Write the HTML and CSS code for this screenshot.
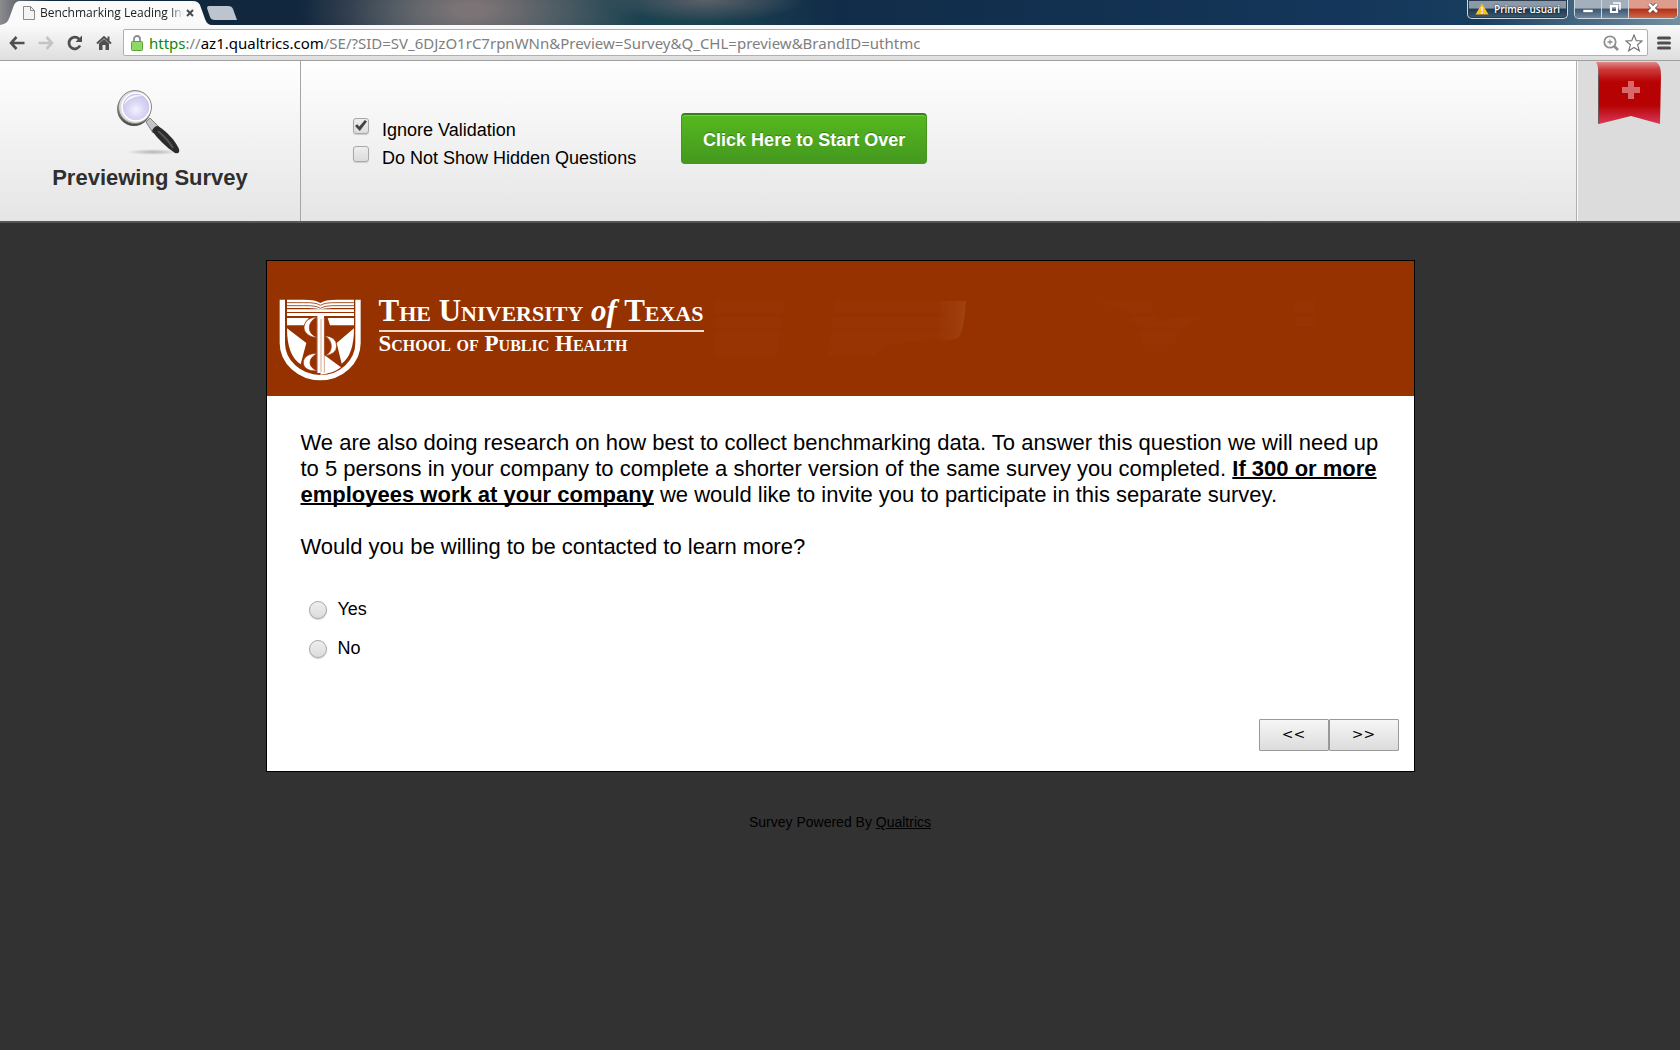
FILE: index.html
```
<!DOCTYPE html>
<html lang="en">
  <head>
    <meta charset="utf-8" />
    <meta name="viewport" content="width=device-width, initial-scale=1.0" />
    <title>Benchmarking Leading Indicators</title>
    <link rel="stylesheet" href="styles.css">
  </head>

  <body>
    <div class="titlebar">
      <div class="tab">
        <svg class="tab-icon" width="12" height="14" viewBox="0 0 12 14">
          <path d="M1 .5h6.500l4 4v9H.5V.5z" fill="#f4f4f4" stroke="#8a8a8a" />
          <path d="M7.500.5v4h4" fill="none" stroke="#8a8a8a" />
        </svg>
        <span class="tab-title">Benchmarking Leading Inc</span>
        <button class="tab-close" aria-label="Close tab">
          <svg width="8" height="8" viewBox="0 0 8 8">
            <path d="M1 1l6 6M7 1L1 7" stroke="#4a4a4a" stroke-width="2" />
          </svg>
        </button>
      </div>
      <button class="new-tab" aria-label="New tab"></button>
      <div class="window-buttons">
        <button class="user">
          <svg width="14" height="12" viewBox="0 0 14 12">
            <path d="M7 .5L13.500 11.500H.5z" fill="#fdbe1f" />
            <path d="M7 4v4M7 9v1.500" stroke="#fff" stroke-width="1.400" />
          </svg>
          Primer usuari
        </button>
        <div class="window-group">
          <button class="win min" aria-label="Minimize">
            <svg width="12" height="12" viewBox="0 0 12 12">
              <path d="M1 7.500h10v3H1z" fill="#fff" stroke="#4a5868" stroke-width=".6" />
            </svg>
          </button>
          <button class="win restore" aria-label="Restore">
            <svg width="12" height="12" viewBox="0 0 12 12">
              <path d="M4 1h7v7" fill="none" stroke="#fff" stroke-width="1.500" />
              <path d="M2 4h6v6H2z" fill="none" stroke="#fff" stroke-width="2.200" />
            </svg>
          </button>
          <button class="win close" aria-label="Close">
            <svg width="12" height="10" viewBox="0 0 12 10">
              <path d="M2 1l8 8M10 1L2 9" stroke="#503030" stroke-width="4" />
              <path d="M2 1l8 8M10 1L2 9" stroke="#fff" stroke-width="2.800" />
            </svg>
          </button>
        </div>
      </div>
    </div>

    <div class="toolbar">
      <button class="tool" aria-label="Back">
        <svg width="16" height="14" viewBox="0 0 16 14">
          <path d="M7.500 1L2 7l5.500 6M2 7h13.500" fill="none" stroke="#4f4f4f" stroke-width="2.600" />
        </svg>
      </button>
      <button class="tool" aria-label="Forward">
        <svg width="16" height="14" viewBox="0 0 16 14">
          <path d="M8.500 1L14 7l-5.500 6M14 7H.5" fill="none" stroke="#c4c4c4" stroke-width="2.600" />
        </svg>
      </button>
      <button class="tool" aria-label="Reload">
        <svg width="16" height="16" viewBox="0 0 16 16">
          <path d="M13 10.500A5.800 5.800 0 1 1 12 4" fill="none" stroke="#4f4f4f" stroke-width="2.800" />
          <path d="M15 .5V7H8.500z" fill="#4f4f4f" />
        </svg>
      </button>
      <button class="tool home" aria-label="Home">
        <svg width="16" height="16" viewBox="0 0 16 16">
          <path d="M1 8.500L8 2l7 6.500M12.500 1.500v4" fill="none" stroke="#4f4f4f" stroke-width="2" />
          <path d="M3 8.500L8 4l5 4.500V15H9.500v-5h-3v5H3z" fill="#4f4f4f" />
        </svg>
      </button>
      <div class="omnibox">
        <svg width="12" height="16" viewBox="0 0 12 16">
          <path d="M3 7V4a3 3 0 0 1 6 0v3" fill="none" stroke="#8c8c8c" stroke-width="1.800" />
          <rect x=".5" y="6.500" width="11" height="9" rx="1" fill="#8fd866" stroke="#55a637" />
        </svg>
        <span class="url"><span class="scheme">https</span>://<span class="host">az1.qualtrics.com</span>/SE/?SID=SV_6DJzO1rC7rpnWNn&amp;Preview=Survey&amp;Q_CHL=preview&amp;BrandID=uthtmc</span>
        <svg width="16" height="16" viewBox="0 0 16 16">
          <circle cx="7" cy="7" r="5.700" fill="none" stroke="#8f8f8f" stroke-width="1.800" />
          <path d="M7 4.500v5M4.500 7h5" stroke="#8f8f8f" stroke-width="1.300" />
          <path d="M11 11l4 4" stroke="#8f8f8f" stroke-width="2.600" />
        </svg>
        <svg width="18" height="18" viewBox="0 0 18 18">
          <path d="M9 1l2.300 5.700 5.900.3-4.600 3.800 1.700 6L9 13.400l-5.300 3.400 1.700-6L.8 7l5.900-.3z" fill="#fff" stroke="#777" stroke-width="1.200" />
        </svg>
      </div>
      <button class="tool menu" aria-label="Menu">
        <svg width="14" height="14" viewBox="0 0 14 14">
          <path d="M1.500 2h11M1.500 7h11M1.500 12h11" stroke="#4f4f4f" stroke-width="3" stroke-linecap="round" />
        </svg>
      </button>
    </div>

    <header class="preview-bar">
      <div class="preview-title">
        <svg width="66" height="66" viewBox="0 0 66 66">
          <defs>
            <radialGradient id="lens" cx=".5" cy=".6" r=".6">
              <stop offset="0" stop-color="#f4f2ff" />
              <stop offset=".5" stop-color="#d9d6f5" />
              <stop offset="1" stop-color="#c6c2e8" />
            </radialGradient>
            <linearGradient id="rim" x1="0" y1="0" x2="0" y2="1">
              <stop offset="0" stop-color="#a5a5a5" />
              <stop offset="1" stop-color="#4a4a4a" />
            </linearGradient>
            <radialGradient id="shade">
              <stop offset="0" stop-color="#777" stop-opacity=".5" />
              <stop offset="1" stop-color="#777" stop-opacity="0" />
            </radialGradient>
          </defs>
          <ellipse cx="36" cy="62" rx="26" ry="3" fill="url(#shade)" />
          <path d="M29 32l4-4 9 9-6 6z" fill="#c4c4c4" stroke="#858585" />
          <path d="M35 41c1-3 3-5 6-5 9 6 17 14 21 23 1 4-1 5-4 4-9-6-17-14-23-22z" fill="#2b2b2b" />
          <path d="M41 41c7 6 12 12 15 17" fill="none" stroke="#555" stroke-width="2" />
          <circle cx="17" cy="19" r="17" fill="url(#rim)" />
          <circle cx="18" cy="17" r="16.500" fill="#d8d8d8" stroke="#888" />
          <circle cx="19" cy="17" r="14" fill="url(#lens)" stroke="#fff" stroke-width="1.500" />
          <path d="M7 15C9 6 18 3 26 6 18 6 11 9 7 15z" fill="#fff" opacity=".8" />
        </svg>
        <h1>Previewing Survey</h1>
      </div>
      <div class="preview-options">
        <div class="checks">
          <label><input type="checkbox" checked /><span>Ignore Validation</span></label>
          <label><input type="checkbox" /><span>Do Not Show Hidden Questions</span></label>
        </div>
        <button class="start-over">Click Here to Start Over</button>
      </div>
      <div class="preview-side">
        <svg width="66" height="64" viewBox="0 0 66 64">
          <defs>
            <linearGradient id="ribbon" x1="0" y1="0" x2="0" y2="1">
              <stop offset="0" stop-color="#df8a8a" />
              <stop offset=".12" stop-color="#cf3a3a" />
              <stop offset=".32" stop-color="#b60202" />
              <stop offset=".7" stop-color="#b60202" />
              <stop offset="1" stop-color="#d93a5c" />
            </linearGradient>
          </defs>
          <path d="M1 2q2 4 1 12v48l2-1V10z" fill="#6d5555" />
          <path d="M0 0H60Q65 2 65 14L64 62 35 54 3 62V14Q3 5 0 0z" fill="url(#ribbon)" />
          <path d="M32 19h6v6h6v6h-6v6h-6v-6h-6v-6h6z" fill="#d66a6a" />
        </svg>
      </div>
    </header>

    <main class="survey">
      <div class="banner">
        <svg class="shield" width="82" height="82" viewBox="55 58 246 246">
          <path d="M65 60V190C65 246 116 294 179 294S292 246 292 190V60" fill="none" stroke="#fff" stroke-width="16" />
          <path d="M79 60h50q38 0 50 10 12-10 50-10h51v25h-65q-28 0-36 5-8-5-35-5H79z" fill="#fff" />
          <path d="M79 69h50q38-1 50 8 14-9 50-8h51M79 78h50q38-1 50 8 14-9 50-8h51" fill="none" stroke="#963100" stroke-width="2.500" />
          <path d="M79 89h201v8H79zM79 100h201v9H79zM79 115h66q-12 9-15 22H79zM201 115h79v22h-72z" fill="#fff" />
          <path d="M79 146l58 44-17 64Q79 228 79 146zM280 146l-52 44 15 62q37-26 37-106z" fill="#fff" />
          <path d="M190 225l51 38q-24 20-62 22z" fill="#fff" />
          <path d="M170 112C144 112 130 128 130 144s18 30 40 29q-24-8-24-29t24-32zM192 168q34 2 36 30 0 26-36 30 20-8 20-28t-20-32zM170 221c-27 0-42 12-42 28s17 27 42 24q-22-8-22-24t22-28z" fill="#fff" stroke="#963100" stroke-width="2" />
          <path d="M170 106h20v174h-20z" fill="#fff" />
          <path d="M169 115v164M191 115v164M181 118v160" stroke="#c07a55" stroke-width="2" />
        </svg>
        <div class="brand">
          <div class="brand-name">The University <i>of</i> Texas</div>
          <div class="brand-school">School of Public Health</div>
        </div>
        <svg class="pattern" width="600" height="80" viewBox="0 0 600 80">
          <defs>
            <linearGradient id="gleam">
              <stop offset="0" stop-color="#a0420f" stop-opacity="0" />
              <stop offset="1" stop-color="#a0420f" />
            </linearGradient>
          </defs>
          <path d="M0 14h70l-8 56H0zM120 14h120l-10 38-60 6-10 11h-48zM380 14h55l8 20 50-10-30 22-4 12h-30l-14-32zM580 14h20v26h-20z" fill="#983303" />
          <path d="M0 28h600M0 42h600" stroke="#963100" stroke-width="3" />
          <path d="M226 14h25q-2 36-10 38l-21 3z" fill="url(#gleam)" />
        </svg>
      </div>

      <form class="question">
        <div class="question-text">
          <p>We are also doing research on how best to collect benchmarking data. To answer this question we will need up to 5 persons in your company to complete a shorter version of the same survey you completed. <b>If 300 or more employees work at your company</b> we would like to invite you to participate in this separate survey.</p>
          <p>Would you be willing to be contacted to learn more?</p>
        </div>
        <div class="choices">
          <label><input type="radio" name="contact" value="yes" /><span>Yes</span></label>
          <label><input type="radio" name="contact" value="no" /><span>No</span></label>
        </div>
        <div class="pager">
          <button type="button">&lt;&lt;</button>
          <button type="button">&gt;&gt;</button>
        </div>
      </form>
    </main>

    <footer>Survey Powered By <a href="#">Qualtrics</a></footer>
  </body>
</html>
```

FILE: styles.css
```
* {
  box-sizing: border-box;
}

body {
  margin: 0;
  min-height: 100vh;
  background-color: #323232;
  color: #000;
  font-family: "Liberation Sans", Arial, sans-serif;
  font-size: 18px;
}

button {
  margin: 0;
  padding: 0;
  border: 0;
  background: none;
  font-family: inherit;
}

svg {
  display: block;
  flex: none;
}

/* window frame */
.titlebar {
  display: flex;
  height: 25px;
  background:
    linear-gradient(to right, #8c8c8e 0, #8c8c8e00 50px),
    radial-gradient(ellipse 100px 22px at 42% 0, #5c5f68, #5c5f6800),
    radial-gradient(ellipse 170px 70px at 28% 40%, #7b7375 10%, #7b737500),
    linear-gradient(to right, #10263b 0, #12283e 21%, #1b4250 25%, #1b4250 42%, #112c48 50%, #14365a 80%, #173d5e 88%, #5c7b92 97%, #75909f);
}

.tab {
  display: flex;
  align-items: center;
  width: 212px;
  padding: 0 18px 0 23px;
  background-color: #fafafa;
  clip-path: path("M0 25C6 24 8 22 10 16L14 5Q16 1 20 1H193Q198 1 200 5L205 19Q207 25 212 25Z");
}

.tab-title {
  flex: 1;
  margin: 0 2px 0 5px;
  overflow: hidden;
  white-space: nowrap;
  font-family: "Open Sans", "Noto Sans", sans-serif;
  font-size: 12px;
  color: #222;
  -webkit-mask-image: linear-gradient(to right, #000 90%, transparent);
  mask-image: linear-gradient(to right, #000 90%, transparent);
}

.new-tab {
  width: 32px;
  height: 14px;
  margin-top: 6px;
  margin-left: -6px;
  background-color: #bcc5cf;
  clip-path: path("M3 0H22Q26 0 27 3L31 14H9Q5 14 4 11L1 2Q1 0 3 0Z");
}

.window-buttons {
  display: flex;
  gap: 6px;
  height: 19px;
  margin-left: auto;
  padding-right: 2px;
}

.user,
.window-group {
  border: 1px solid #cdd8e0;
  border-top: 0;
  border-radius: 0 0 5px 5px;
  box-shadow: inset 0 0 0 1px #2b3c4e;
  overflow: hidden;
}

.user {
  display: flex;
  align-items: center;
  gap: 5px;
  padding: 0 7px 1px;
  background: linear-gradient(#8c9aa8 45%, #1d3953 50%, #3c5a72);
  color: #fff;
  font-family: "Open Sans", "Noto Sans", sans-serif;
  font-size: 10px;
  font-weight: 600;
  text-shadow: 0 0 2px #000;
}

.window-group {
  display: flex;
}

.win {
  display: flex;
  align-items: center;
  justify-content: center;
  width: 27px;
  padding-bottom: 2px;
  border-right: 1px solid #cdd8e0;
  background: linear-gradient(#a3b0bc 45%, #3c5570 50%, #7089a0);
}

.win.close {
  width: 48px;
  border-right: 0;
  background: linear-gradient(#dd9c8c 45%, #b32d17 50%, #cf6a48);
}

.toolbar {
  display: flex;
  align-items: center;
  height: 36px;
  padding: 0 7px 0 9px;
  border-bottom: 1px solid #a0a0a0;
  background: linear-gradient(#fafafa, #dedede);
}

.tool {
  width: 16px;
  margin-right: 13px;
}

.tool.home {
  margin-right: 11px;
}

.tool.menu {
  margin: 0 0 0 9px;
}

.omnibox {
  display: flex;
  flex: 1;
  align-items: center;
  gap: 6px;
  height: 27px;
  padding: 0 4px 0 7px;
  border: 1px solid #b0b0b0;
  border-radius: 2px;
  background-color: #fff;
}

.url {
  flex: 1;
  overflow: hidden;
  white-space: nowrap;
  color: #808080;
  font-family: "Noto Sans", "Open Sans", sans-serif;
  font-size: 15px;
}

.scheme {
  color: #0a8a0a;
}

.host {
  color: #000;
}

/* preview controls */
.preview-bar {
  display: flex;
  height: 162px;
  border-bottom: 2px solid #55555a;
  background: linear-gradient(#fff, #e5e5e5);
}

.preview-title {
  display: flex;
  flex-direction: column;
  align-items: center;
  width: 301px;
  padding-top: 29px;
  border-right: 1px solid #a5a5a5;
}

.preview-title h1 {
  margin: 8px 0 0;
  color: #2f2f2f;
  font-size: 22px;
  line-height: 28px;
}

.preview-options {
  display: flex;
  flex: 1;
  align-items: flex-start;
  gap: 45px;
  padding: 52px 0 0 52px;
}

.checks label {
  display: flex;
  gap: 13px;
  height: 28px;
  line-height: 34px;
}

input[type="checkbox"],
input[type="radio"] {
  appearance: none;
  flex: none;
  width: 16px;
  height: 16px;
  margin: 5px 0 0;
  border: 1px solid #a8a8a8;
  border-radius: 3px;
  background: linear-gradient(#eee, #dcdcdc);
  box-shadow: 0 1px 1px #ccc;
}

input[type="checkbox"]:checked::before {
  content: "";
  display: block;
  width: 12px;
  height: 11px;
  margin: 1px;
  background-color: #444;
  clip-path: polygon(0 55%, 18% 38%, 36% 60%, 82% 0, 100% 14%, 40% 100%);
}

input[type="radio"] {
  width: 18px;
  height: 18px;
  margin: 0;
  border-radius: 50%;
}

.start-over {
  width: 246px;
  height: 51px;
  padding-top: 2px;
  border: 1px solid #47961f;
  border-top: 2px solid #35801a;
  border-radius: 4px;
  background: linear-gradient(#55b91e, #44981f);
  box-shadow: inset 0 1px 0 #7acb4e;
  color: #fff;
  font-size: 18px;
  font-weight: bold;
  text-shadow: 0 -1px 0 #3a7d18;
}

.preview-side {
  width: 104px;
  padding: 1px 0 0 19px;
  border-left: 1px solid #b0b0b0;
  box-shadow: inset 1px 0 0 #f8f8f8;
  background-color: #dcdcdc;
}

/* survey */
.survey {
  width: calc(100% - 40px);
  max-width: 1149px;
  margin: 37px auto 0;
  border: 1px solid #000;
  background-color: #fff;
}

.banner {
  position: relative;
  display: flex;
  height: 135px;
  padding: 38px 0 0 12px;
  background-color: #963100;
  color: #fff;
}

.brand {
  margin-left: 18px;
  font-family: "Liberation Serif", "Times New Roman", serif;
  font-variant: small-caps;
  font-weight: bold;
}

.brand-name {
  padding-bottom: 8px;
  border-bottom: 2px solid #efd9cc;
  font-size: 31px;
  line-height: 23px;
}

.brand-name i {
  font-variant: normal;
}

.brand-school {
  margin-top: 1px;
  font-size: 23px;
  line-height: 22px;
}

.pattern {
  position: absolute;
  top: 26px;
  left: 448px;
}

.question {
  padding: 34px 15px 20px 34px;
}

.question-text {
  padding-right: 15px;
  font-size: 22px;
  line-height: 26px;
}

.question-text p {
  margin: 0 0 26px;
}

.question-text b {
  text-decoration: underline;
  text-decoration-thickness: 2px;
  text-decoration-skip-ink: none;
}

.choices {
  padding: 4px 0 0 8px;
}

.choices label {
  display: flex;
  align-items: center;
  gap: 11px;
  height: 39px;
}

.pager {
  display: flex;
  justify-content: flex-end;
  margin-top: 51px;
}

.pager button {
  width: 70px;
  height: 32px;
  padding-bottom: 2px;
  border: 1px solid #999;
  border-radius: 1px;
  background: linear-gradient(#f6f6f6, #dcdcdc);
  color: #000;
  font-family: "DejaVu Sans", sans-serif;
  font-size: 14px;
}

footer {
  padding: 41px 0;
  color: #000;
  font-size: 14px;
  line-height: 18px;
  text-align: center;
}

footer a {
  color: #000;
}
```
